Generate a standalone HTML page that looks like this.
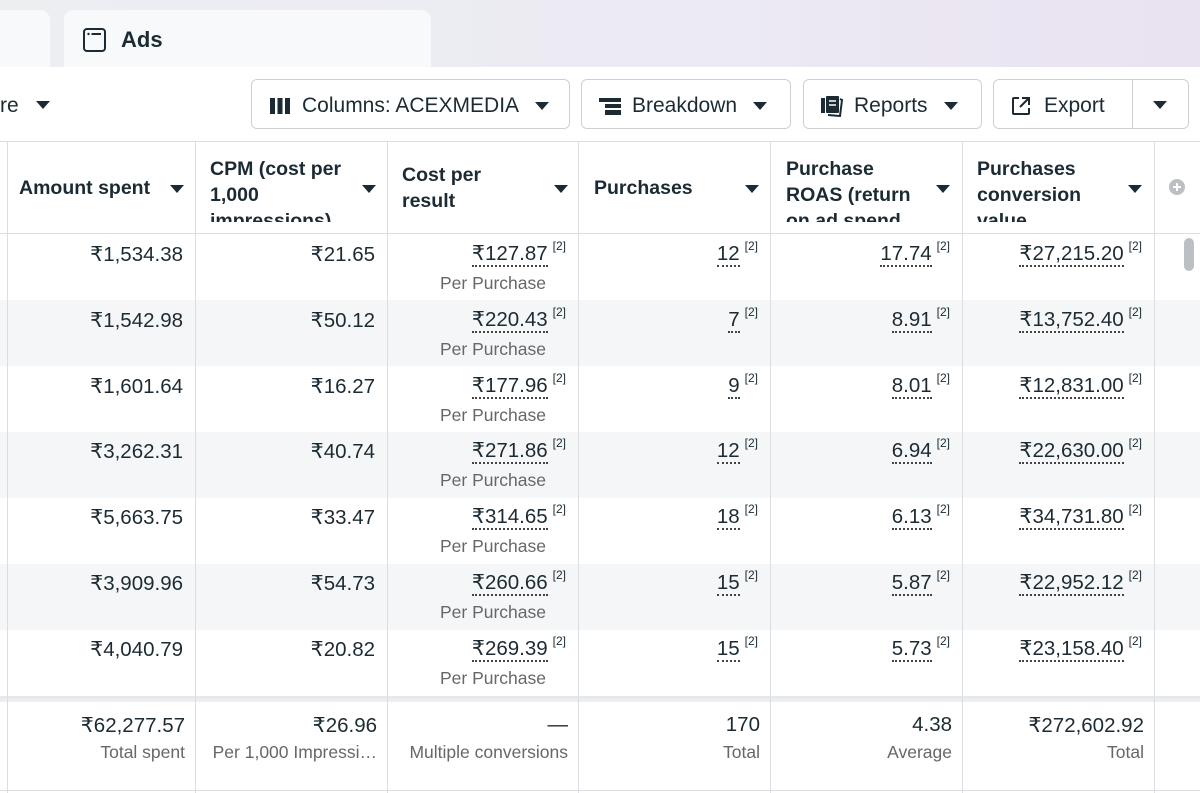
<!DOCTYPE html>
<html><head><meta charset="utf-8"><style>
*{margin:0;padding:0;box-sizing:border-box}
body{width:1200px;height:793px;overflow:hidden;font-family:"Liberation Sans","DejaVu Sans",sans-serif;color:#1c2b33;background:#fff;position:relative}
.top{position:absolute;left:0;top:0;width:1200px;height:67px;background:linear-gradient(90deg,#eceef2 0%,#eceaf3 60%,#e9e2f1 100%)}
.tab{position:absolute;top:10px;height:57px;background:#f7f9fa;border-radius:10px 10px 0 0}
.bar{position:absolute;left:0;top:67px;width:1200px;height:75px;background:#fff;border-bottom:1px solid #dadde1}
.btn{position:absolute;top:79px;height:50px;border:1px solid #ccd0d5;border-radius:6px;background:#fff;font-size:21px;display:flex;align-items:center;padding-left:16px;padding-top:3px;color:#1c2b33}
.tri{display:inline-block;width:0;height:0;border-left:7px solid transparent;border-right:7px solid transparent;border-top:8px solid #1c2b33}
.vl{position:absolute;top:142px;width:1px;height:651px;background:#dadde1}
.hd{position:absolute;top:156px;font-weight:bold;font-size:19.5px;line-height:26px;height:66px;overflow:hidden}
.ht{position:absolute;top:185px}
.row{position:absolute;left:0;width:1200px;height:66px}
.c{position:absolute;text-align:right;font-size:20.5px;white-space:nowrap}
.u{border-bottom:2px dotted #444;line-height:20px}
sup{font-size:12px;vertical-align:top;position:relative;top:-3px;margin-left:5px}
.s{position:absolute;font-size:17.5px;color:#65676b;text-align:right;white-space:nowrap}
</style></head><body>
<div class="top"></div>
<div class="tab" style="left:-20px;width:70px"></div>
<div class="tab" style="left:64px;width:367px"></div>
<svg style="position:absolute;left:82px;top:27px" width="26" height="26" viewBox="0 0 26 26"><rect x="2" y="2" width="21" height="22" rx="3" fill="none" stroke="#1c2b33" stroke-width="2"/><circle cx="6.5" cy="7" r="1.2" fill="#1c2b33"/><line x1="9.5" y1="7" x2="19" y2="7" stroke="#1c2b33" stroke-width="2"/></svg>
<div style="position:absolute;left:121px;top:27px;font-size:22px;font-weight:bold">Ads</div>
<div class="bar"></div>
<div style="position:absolute;left:0;top:94px;font-size:21px">re</div>
<div class="tri" style="position:absolute;left:36px;top:101px"></div>
<div class="btn" style="left:251px;width:319px"><svg width="24" height="20"><rect x="2" y="2" width="5" height="16" fill="#1c2b33"/><rect x="9.5" y="2" width="5" height="16" fill="#1c2b33"/><rect x="17" y="2" width="5" height="16" fill="#1c2b33"/></svg><span style="margin-left:10px">Columns: ACEXMEDIA</span><span class="tri" style="margin-left:16px"></span></div>
<div class="btn" style="left:581px;width:210px"><svg width="24" height="20"><rect x="1" y="2" width="22" height="4" fill="#1c2b33"/><rect x="7" y="8" width="16" height="4" fill="#1c2b33"/><rect x="7" y="14" width="16" height="5" fill="#1c2b33"/></svg><span style="margin-left:10px">Breakdown</span><span class="tri" style="margin-left:16px"></span></div>
<div class="btn" style="left:803px;width:179px"><svg width="24" height="22"><rect x="1" y="3" width="4" height="15" fill="#1c2b33"/><rect x="6" y="1" width="13" height="17" rx="1" fill="#1c2b33"/><line x1="9" y1="6" x2="16" y2="6" stroke="#fff" stroke-width="1.5"/><line x1="9" y1="10" x2="16" y2="10" stroke="#fff" stroke-width="1.5"/><path d="M20 4 L22 5 L20 21 L8 20" fill="none" stroke="#1c2b33" stroke-width="2"/></svg><span style="margin-left:10px">Reports</span><span class="tri" style="margin-left:16px"></span></div>
<div class="btn" style="left:993px;width:196px"><svg width="22" height="22"><path d="M9 3H4a1 1 0 0 0-1 1v14a1 1 0 0 0 1 1h14a1 1 0 0 0 1-1v-5" fill="none" stroke="#1c2b33" stroke-width="2"/><path d="M12 3h7v7M19 3l-9 9" fill="none" stroke="#1c2b33" stroke-width="2"/></svg><span style="margin-left:12px">Export</span><span style="position:absolute;left:138px;top:0;width:1px;height:48px;background:#ccd0d5"></span><span class="tri" style="position:absolute;left:159px;top:21px"></span></div>

<div class="row" style="top:300px;background:#f5f6f7"></div>
<div class="row" style="top:432px;background:#f5f6f7"></div>
<div class="row" style="top:564px;background:#f5f6f7"></div>
<div style="position:absolute;left:0;top:233px;width:1200px;height:1px;background:#dadde1"></div>
<div style="position:absolute;left:0;top:696px;width:1200px;height:6px;background:linear-gradient(#e4e6e9,#f0f1f3)"></div>
<div style="position:absolute;left:0;top:790px;width:1200px;height:1px;background:#dadde1"></div>
<div class="vl" style="left:7px"></div><div class="vl" style="left:195px"></div><div class="vl" style="left:387px"></div><div class="vl" style="left:578px"></div><div class="vl" style="left:770px"></div><div class="vl" style="left:962px"></div><div class="vl" style="left:1154px"></div>

<div class="hd" style="left:19px;top:175px">Amount spent</div><div class="tri ht" style="left:170px"></div>
<div class="hd" style="left:210px">CPM (cost per<br>1,000<br>impressions)</div><div class="tri ht" style="left:362px"></div>
<div class="hd" style="left:402px;top:162px">Cost per<br>result</div><div class="tri ht" style="left:554px"></div>
<div class="hd" style="left:594px;top:175px">Purchases</div><div class="tri ht" style="left:745px"></div>
<div class="hd" style="left:786px">Purchase<br>ROAS (return<br>on ad spend</div><div class="tri ht" style="left:936px"></div>
<div class="hd" style="left:977px">Purchases<br>conversion<br>value</div><div class="tri ht" style="left:1128px"></div>
<svg style="position:absolute;left:1168px;top:178px" width="18" height="18"><circle cx="9" cy="9" r="8" fill="#bcc0c4"/><path d="M9 5v8M5 9h8" stroke="#fff" stroke-width="2"/></svg>
<div style="position:absolute;left:1184px;top:238px;width:10px;height:33px;border-radius:5px;background:#bcc0c4"></div>

<div id="rows"></div>
<script>
var d=[["₹1,534.38","₹21.65","₹127.87","12","17.74","₹27,215.20"],["₹1,542.98","₹50.12","₹220.43","7","8.91","₹13,752.40"],["₹1,601.64","₹16.27","₹177.96","9","8.01","₹12,831.00"],["₹3,262.31","₹40.74","₹271.86","12","6.94","₹22,630.00"],["₹5,663.75","₹33.47","₹314.65","18","6.13","₹34,731.80"],["₹3,909.96","₹54.73","₹260.66","15","5.87","₹22,952.12"],["₹4,040.79","₹20.82","₹269.39","15","5.73","₹23,158.40"]];
var R=[195,387,578,770,962,1154],h="";
d.forEach(function(r,i){var t=242+i*65.8;
h+='<div class="c" style="right:'+(1200-183)+'px;top:'+t+'px">'+r[0]+'</div>';
h+='<div class="c" style="right:'+(1200-375)+'px;top:'+t+'px">'+r[1]+'</div>';
for(var k=2;k<6;k++){h+='<div class="c" style="right:'+(1200-R[k]+12)+'px;top:'+t+'px"><span class="u">'+r[k]+'</span><sup>[2]</sup></div>';}
h+='<div class="s" style="right:'+(1200-546)+'px;top:'+(t+31)+'px">Per Purchase</div>';});
var f=[["₹62,277.57","Total spent"],["₹26.96","Per 1,000 Impressi…"],["—","Multiple conversions"],["170","Total"],["4.38","Average"],["₹272,602.92","Total"]];
f.forEach(function(x,k){h+='<div class="c" style="right:'+(1200-R[k]+10)+'px;top:713px">'+x[0]+'</div><div class="s" style="right:'+(1200-R[k]+10)+'px;top:742px">'+x[1]+'</div>';});
document.getElementById("rows").innerHTML=h;
</script>
</body></html>
